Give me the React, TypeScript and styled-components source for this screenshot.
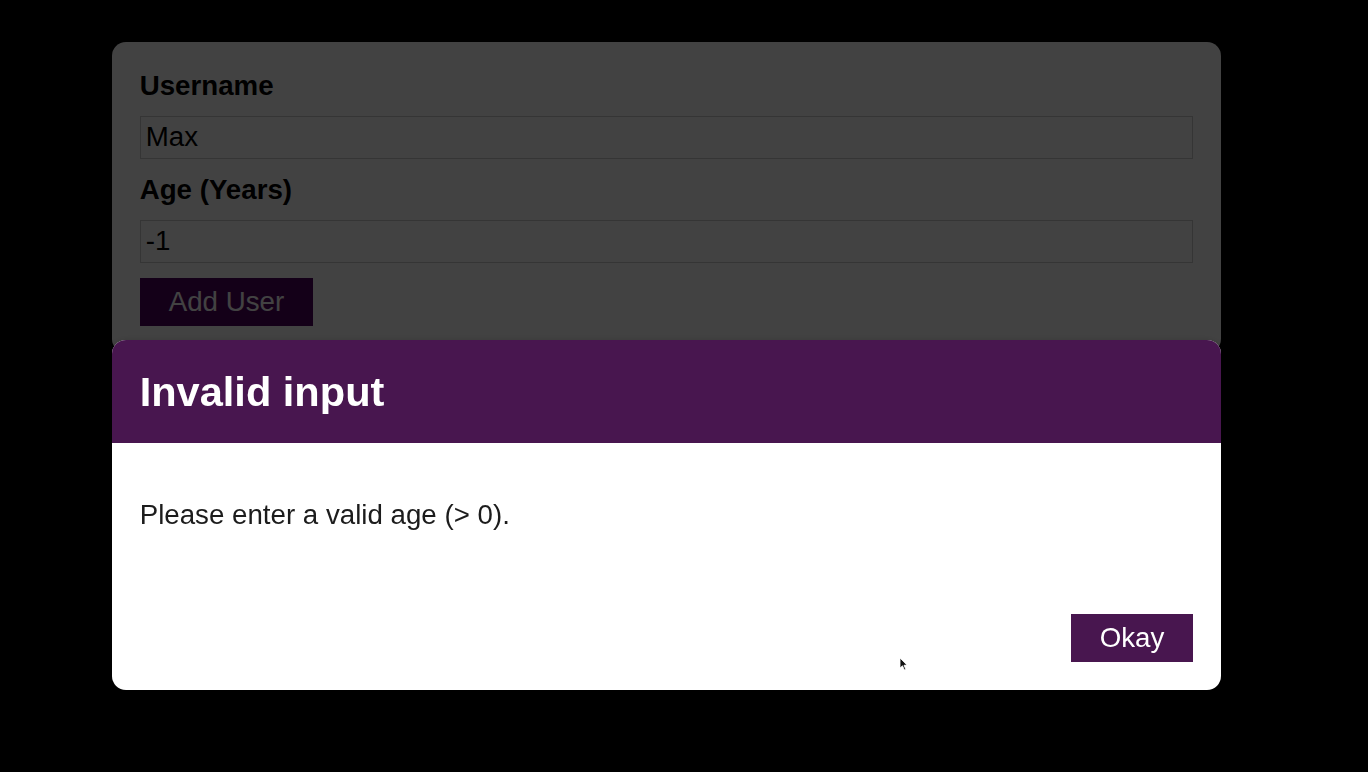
import React, { ReactElement } from 'react';
import styled, { createGlobalStyle } from 'styled-components';

// the reference is the classic 16px layout shown at ~1.73x zoom
const rem = 27.7;
const purple = '#48164f';

const GlobalStyle = createGlobalStyle`
  html, body {
    margin: 0;
    height: 100%;
    background: #000;
  }
  body {
    font-family: 'Liberation Sans', Arial, Helvetica, sans-serif;
    font-size: ${rem}px;
  }
  * {
    box-sizing: border-box;
  }
`;

const Page = styled.main`
  padding: 42px 147px 0 112px;
`;

const Card = styled.div`
  background: #fff;
  border-radius: 14px;
  box-shadow: 0 2px 8px rgba(0, 0, 0, 0.26);
`;

const Form = styled.form`
  padding: ${rem}px;
  display: flex;
  flex-direction: column;
`;

const Label = styled.label`
  display: block;
  font-weight: bold;
  line-height: 32px;
  margin-bottom: 14px;
  color: #000;
`;

const Input = styled.input`
  font: inherit;
  line-height: 32px;
  display: block;
  width: 100%;
  border: 1px solid #ccc;
  padding: 4.5px 5px;
  margin-bottom: 15px;
  color: #000;
  background: #fff;
  outline: none;
`;

const Button = styled.button`
  font: inherit;
  line-height: 32px;
  border: 1px solid ${({ color }) => color};
  background: ${({ color }) => color};
  color: #fff;
  padding: 7px 28px;
  cursor: pointer;
  align-self: flex-start;
`;

const Backdrop = styled.div`
  position: fixed;
  inset: 0;
  z-index: 10;
  background: rgba(0, 0, 0, 0.74);
`;

const Modal = styled(Card)`
  position: fixed;
  top: 340px;
  left: 112px;
  width: 1109px;
  z-index: 100;
  overflow: hidden;
`;

const Header = styled.header`
  background: ${purple};
  padding: ${rem}px;
`;

const Title = styled.h2`
  margin: 0;
  color: #fff;
  font-size: ${rem * 1.5}px;
  font-weight: bold;
`;

const Content = styled.div`
  padding: ${rem}px;
`;

const Message = styled.p`
  margin: ${rem}px 0;
  line-height: 32px;
  color: #1c1c1c;
`;

const Actions = styled.footer`
  padding: ${rem}px;
  display: flex;
  justify-content: flex-end;
`;

const Pointer = styled.svg`
  position: fixed;
  left: 899px;
  top: 657px;
  z-index: 200;
`;

export default function App(): ReactElement {
  return (
    <>
      <GlobalStyle />
      <Page>
        <Card>
          <Form onSubmit={(e) => e.preventDefault()}>
            <Label htmlFor="username">Username</Label>
            <Input id="username" type="text" defaultValue="Max" />
            <Label htmlFor="age">Age (Years)</Label>
            <Input id="age" type="number" defaultValue="-1" />
            <Button type="submit" color="#4f005f">
              Add User
            </Button>
          </Form>
        </Card>
      </Page>
      <Backdrop />
      <Modal>
        <Header>
          <Title>Invalid input</Title>
        </Header>
        <Content>
          <Message>Please enter a valid age (&gt; 0).</Message>
        </Content>
        <Actions>
          <Button type="button" color={purple}>
            Okay
          </Button>
        </Actions>
      </Modal>
      <Pointer width="9" height="14" viewBox="0 0 9 14">
        <path d="M1 1 L1 11 L3.5 8.8 L5.4 13 L6.8 12.3 L5 8.3 L8 8.1 Z" fill="#111" stroke="#fff" strokeWidth="0.8" />
      </Pointer>
    </>
  );
}
